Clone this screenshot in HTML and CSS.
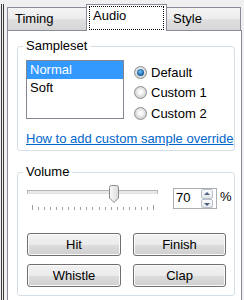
FILE: index.html
```html
<!DOCTYPE html>
<html>
    <head>
        <title>Audio</title>
        <link rel="stylesheet" href="styles.css">
    </head>
    <body>
        <div class="window">
            <div class="tabs">
                <div class="tab tab-timing">Timing</div>
                <div class="tab active"><span class="focus">Audio</span></div>
                <div class="tab tab-style">Style</div>
            </div>

            <div class="panel">
                <fieldset class="group sampleset">
                    <legend>Sampleset</legend>
                    <div class="sample-row">
                        <ul class="list">
                            <li class="selected">Normal</li>
                            <li>Soft</li>
                        </ul>
                        <div class="radios">
                            <label class="radio"><span class="dot checked"></span>Default</label>
                            <label class="radio"><span class="dot"></span>Custom 1</label>
                            <label class="radio"><span class="dot"></span>Custom 2</label>
                        </div>
                    </div>
                    <a class="link" href="#">How to add custom sample override</a>
                </fieldset>

                <fieldset class="group volume">
                    <legend>Volume</legend>
                    <div class="volume-row">
                        <div class="slider">
                            <div class="track"></div>
                            <svg class="thumb" width="10" height="18" viewBox="0 0 10 18">
                                <defs>
                                    <linearGradient id="thumb-fill" x1="0" y1="0" x2="1" y2="0">
                                        <stop offset="0" stop-color="#fbfbfb" />
                                        <stop offset="1" stop-color="#d9d9d9" />
                                    </linearGradient>
                                </defs>
                                <path d="M0.5 2.5 Q0.5 0.5 2.5 0.5 H7.5 Q9.5 0.5 9.5 2.5 V13 L5 17.5 L0.5 13 Z" fill="url(#thumb-fill)" stroke="#8a8a8a" />
                            </svg>
                            <div class="ticks">
                                <span class="end"></span><span></span><span></span><span></span><span></span>
                                <span></span><span></span><span></span><span></span><span></span>
                                <span></span><span></span><span></span><span></span><span></span>
                                <span></span><span></span><span></span><span></span><span></span>
                                <span class="end"></span>
                            </div>
                        </div>
                        <div class="spin">
                            <span class="value">70</span>
                            <span class="arrows">
                                <span class="arrow up"></span>
                                <span class="arrow down"></span>
                            </span>
                        </div>
                        <span class="pct">%</span>
                    </div>
                    <div class="buttons">
                        <button>Hit</button>
                        <button>Finish</button>
                        <button>Whistle</button>
                        <button>Clap</button>
                    </div>
                </fieldset>
            </div>
        </div>
    </body>
</html>
```

FILE: styles.css
```css
* {
    box-sizing: border-box;
}
body {
    margin: 0;
    background: #f0f0f0;
    font-family: "Liberation Sans", Arial, sans-serif;
    font-size: 13px;
    color: #000;
    overflow: hidden;
}
.window {
    margin-left: 1px;
    border-left: 3px double #3a3a3a;
    padding-left: 3px;
    height: 300px;
}

/* tabs */
.tabs {
    display: flex;
    align-items: flex-end;
    height: 26px;
    margin-top: 4px;
}
.tab {
    height: 23px;
    padding: 3px 0 0 7px;
    border: 1px solid #898c95;
    border-bottom: 0;
    background: linear-gradient(#f4f4f4, #ececec 50%, #e0e0e0 50%, #d6d6d6);
    line-height: 16px;
}
.tab-timing {
    width: 81px;
}
.tab-style {
    width: 76px;
}
.tab.active {
    width: 81px;
    height: 27px;
    margin: 0 -2px -1px;
    padding: 1px 2px 0;
    background: #fff;
    position: relative;
    z-index: 2;
}
.focus {
    display: block;
    height: 24px;
    padding: 1px 0 0 3px;
    border: 1px dotted #000;
}

/* page */
.panel {
    width: 235px;
    height: 280px;
    border: 1px solid #898c95;
    background: #fff;
    padding: 7px 0 0 9px;
}
.group {
    margin: 0;
    min-width: 0;
    width: 218px;
    border: 1px solid #d5dfe5;
    border-radius: 3px;
    padding: 6px 0 3px 8px;
}
.group legend {
    padding: 0 3px;
    margin-left: -3px;
    line-height: 16px;
}
.sample-row {
    display: flex;
    align-items: flex-start;
    height: 59px;
}
.list {
    list-style: none;
    margin: 0;
    padding: 0;
    width: 98px;
    height: 59px;
    border: 1px solid #828790;
    background: #fff;
}
.list li {
    height: 18px;
    line-height: 18px;
    padding-left: 3px;
}
.list li.selected {
    background: #3399ff;
    color: #fff;
}
.radios {
    margin: 2px 0 0 10px;
}
.radio {
    display: flex;
    align-items: center;
    height: 20.5px;
}
.dot {
    width: 13px;
    height: 13px;
    margin-right: 4px;
    border: 1px solid #8c8e8f;
    border-radius: 50%;
    background: radial-gradient(circle at 50% 45%, #fbfbfb 20%, #dadada 60%, #c6c6c6);
    position: relative;
}
.dot.checked::after {
    content: "";
    position: absolute;
    left: 2px;
    top: 2px;
    width: 7px;
    height: 7px;
    border-radius: 50%;
    background: radial-gradient(circle at 45% 40%, #7fc6f3, #1c6bb0 55%, #0c3f73);
}
.link {
    display: block;
    margin-top: 12px;
    line-height: 16px;
    color: #0066cc;
    white-space: nowrap;
    overflow: hidden;
}

/* volume */
.volume {
    margin-top: 13px;
    padding: 5px 0 8px 9px;
}
.volume legend {
    margin-left: -4px;
}
.volume-row {
    display: flex;
    align-items: flex-start;
    height: 26px;
}
.slider {
    position: relative;
    width: 131px;
    height: 26px;
}
.track {
    margin-top: 5px;
    height: 4px;
    border: 1px solid #b4b4b4;
    border-bottom-color: #e2e2e2;
    background: #e9e9e9;
}
.thumb {
    position: absolute;
    left: 82px;
    top: 0;
}
.ticks {
    display: flex;
    justify-content: space-between;
    align-items: flex-end;
    margin: 11px 0 0 5px;
    width: 122px;
    height: 5px;
}
.ticks span {
    width: 1px;
    height: 3px;
    background: #a0a0a0;
}
.ticks span.end {
    height: 5px;
}
.spin {
    display: flex;
    margin: 3px 0 0 15px;
    width: 44px;
    height: 21px;
    border: 1px solid #abadb3;
    background: #fff;
}
.value {
    flex: 1;
    padding-left: 2px;
    line-height: 18px;
}
.arrows {
    display: flex;
    flex-direction: column;
    width: 12px;
    margin-right: 3px;
}
.arrow {
    flex: 1;
    position: relative;
    border: 1px solid #b9c2cc;
    border-radius: 2px;
    background: linear-gradient(#fdfdfd, #e4e6e9);
}
.arrow::after {
    content: "";
    position: absolute;
    left: 2px;
    top: 2px;
    border-left: 3px solid transparent;
    border-right: 3px solid transparent;
}
.arrow.up::after {
    border-bottom: 3px solid #4d6185;
}
.arrow.down::after {
    top: 3px;
    border-top: 3px solid #4d6185;
}
.pct {
    margin: 4px 0 0 3px;
    line-height: 16px;
}
.buttons {
    display: grid;
    grid-template-columns: 94px 93px;
    column-gap: 12px;
    row-gap: 8px;
    margin-top: 22px;
}
button {
    height: 23px;
    padding: 0;
    font: inherit;
    color: #000;
    border: 1px solid #707070;
    border-radius: 3px;
    background: linear-gradient(#f2f2f2, #ebebeb 50%, #dddddd 50%, #cfcfcf);
    box-shadow: inset 0 0 0 1px #fbfbfb;
}
```
